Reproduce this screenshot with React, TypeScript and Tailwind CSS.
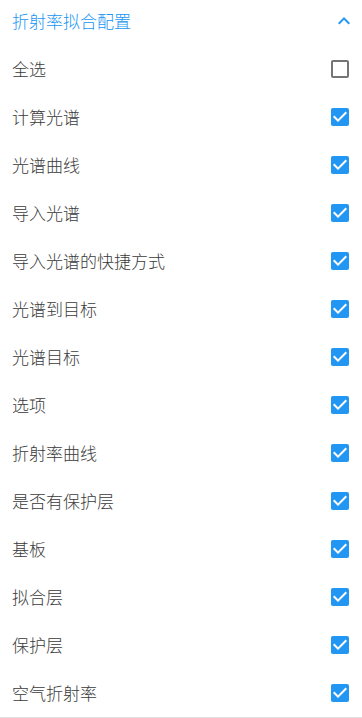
import React, { useState } from "react";

const items: [string, boolean][] = [
  ["全选", false],
  ["计算光谱", true],
  ["光谱曲线", true],
  ["导入光谱", true],
  ["导入光谱的快捷方式", true],
  ["光谱到目标", true],
  ["光谱目标", true],
  ["选项", true],
  ["折射率曲线", true],
  ["是否有保护层", true],
  ["基板", true],
  ["拟合层", true],
  ["保护层", true],
  ["空气折射率", true],
];

function CheckIcon({ checked }: { checked: boolean }) {
  return checked ? (
    <svg width="24" height="24" viewBox="0 0 24 24" className="block">
      <path
        fill="#2196f3"
        d="M19 3H5c-1.11 0-2 .9-2 2v14c0 1.1.89 2 2 2h14c1.11 0 2-.9 2-2V5c0-1.1-.89-2-2-2zm-9 14l-5-5 1.41-1.41L10 14.17l7.59-7.59L19 8l-9 9z"
      />
    </svg>
  ) : (
    <svg width="24" height="24" viewBox="0 0 24 24" className="block">
      <path
        fill="#757575"
        d="M19 5v14H5V5h14m0-2H5c-1.1 0-2 .9-2 2v14c0 1.1.9 2 2 2h14c1.1 0 2-.9 2-2V5c0-1.1-.9-2-2-2z"
      />
    </svg>
  );
}

export default function App() {
  const [state] = useState(items);
  return (
    <div
      className="w-[362px] h-[718px] bg-white overflow-hidden"
      style={{ fontFamily: '"Noto Sans CJK SC", "Noto Sans", sans-serif' }}
    >
      <div className="border-b border-[#e0e0e0]">
        <div className="h-[45px] flex items-start justify-between pl-3 pr-[6px] pt-[8px]">
          <span className="text-[17px] leading-[26px] font-light text-[#2196f3]">折射率拟合配置</span>
          <svg width="24" height="24" viewBox="0 0 24 24" className="block mt-[1px]">
            <path fill="#2196f3" d="M12 8l-6 6 1.41 1.41L12 10.83l4.59 4.58L18 14z" />
          </svg>
        </div>
        {state.map(([label, checked]) => (
          <div key={label} className="h-[48px] flex items-center justify-between pl-3 pr-[10px]">
            <span className="text-[17px] leading-[24px] font-light text-[#3a3a3a]">{label}</span>
            <CheckIcon checked={checked} />
          </div>
        ))}
      </div>
    </div>
  );
}
